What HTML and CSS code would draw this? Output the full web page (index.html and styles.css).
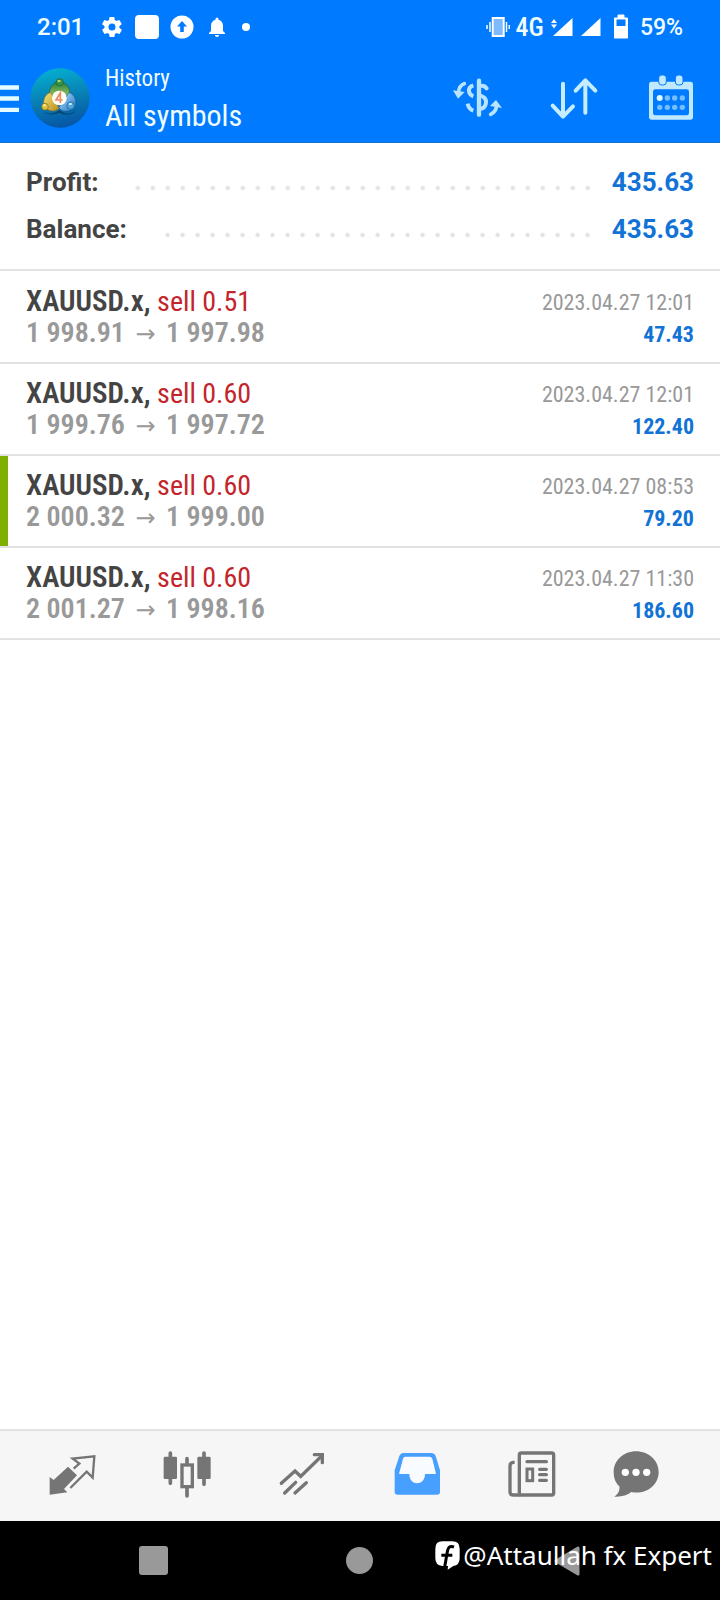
FILE: index.html
```html
<!DOCTYPE html>
<html lang="en">
<head>
<meta charset="utf-8">
<meta name="viewport" content="width=device-width, initial-scale=1">
<title>History</title>
<link rel="stylesheet" href="styles.css">
</head>
<body>
<div class="app">
  <header class="header">
    <div class="status">
      <span class="time">2:01</span>
      <div class="status-left">
        <svg width="24" height="24" viewBox="0 0 24 24" fill="#fff"><path d="M19.4 13a7.500 7.500 0 0 0 0-2l2.100-1.600a.5.5 0 0 0 .1-.6l-2-3.500a.5.5 0 0 0-.6-.2l-2.500 1a7.300 7.300 0 0 0-1.700-1l-.4-2.600a.5.5 0 0 0-.5-.4h-4a.5.5 0 0 0-.5.4L9 5.100a7.700 7.700 0 0 0-1.700 1l-2.500-1a.5.5 0 0 0-.6.2l-2 3.500a.5.5 0 0 0 .1.6L4.500 11a8 8 0 0 0 0 2l-2.100 1.600a.5.5 0 0 0-.1.6l2 3.500c.1.200.4.300.6.200l2.500-1c.5.400 1.100.700 1.700 1l.4 2.600c0 .2.200.4.500.4h4c.2 0 .5-.2.5-.4l.4-2.600a7.300 7.300 0 0 0 1.700-1l2.500 1c.2.100.5 0 .6-.2l2-3.500a.5.500 0 0 0-.1-.6zM12 15.500a3.500 3.500 0 1 1 0-7 3.500 3.500 0 0 1 0 7z"/></svg>
        <span class="app-square"></span>
        <svg width="24" height="24" viewBox="0 0 24 24"><circle cx="12" cy="12" r="11.500" fill="#fff"/><path d="M12 6l5 5.500h-3.200V17h-3.600v-5.500H7z" fill="#007aff"/></svg>
        <svg width="24" height="24" viewBox="0 0 24 24" fill="#fff"><path d="M12 22a2.200 2.200 0 0 0 2.200-2H9.800a2.200 2.200 0 0 0 2.200 2zm6-6v-5c0-3.100-1.600-5.600-4.500-6.300V4a1.500 1.500 0 0 0-3 0v.7C7.600 5.400 6 7.900 6 11v5l-2 2v1h16v-1z"/></svg>
        <span class="dot"></span>
      </div>
      <div class="status-right">
        <svg width="24" height="20" viewBox="0 0 24 20"><rect x="6.700" y="1" width="11" height="18" fill="#7fb9ff" stroke="#fff" stroke-width="2"/><path d="M4 5v10M1 8v4M20.500 5v10M23.300 8v4" stroke="#fff" stroke-width="1.500"/></svg>
        <span class="network">4G</span>
        <svg class="signal-a" width="22" height="20" viewBox="0 0 22 20" fill="#fff"><path d="M21.500 1v18H2zM0 6l3-4 3 4zM0 7.500h6l-3 4z"/></svg>
        <svg class="signal-b" width="20" height="20" viewBox="0 0 20 20" fill="#fff"><path d="M19.500 1v18H0z"/></svg>
        <svg class="battery" width="16" height="26" viewBox="0 0 16 26"><path d="M5 1h6v3h3.500v20h-13V4H5z" fill="#fff" stroke="#fff" stroke-linejoin="round"/><path d="M3.500 5.500h9V12h-9z" fill="#007aff"/></svg>
        <span class="percent">59%</span>
      </div>
    </div>
    <div class="appbar">
      <button class="menu" type="button" aria-label="Menu"><svg width="19" height="28" viewBox="0 0 19 28"><path d="M0 3.500h19M0 14.500h19M0 26h19" stroke="#e4fbff" stroke-width="4.500"/></svg></button>
      <svg class="avatar" width="60" height="60" viewBox="0 0 180 180" role="img" aria-label="Account">
        <defs>
          <linearGradient id="sky" x1=".4" y1="0" x2=".6" y2="1"><stop offset="0" stop-color="#05aed0"/><stop offset=".5" stop-color="#087fb4"/><stop offset="1" stop-color="#0654a5"/></linearGradient>
          <linearGradient id="green" x1="0" y1="0" x2="0" y2="1"><stop offset="0" stop-color="#277f3b"/><stop offset="1" stop-color="#a7cf6b"/></linearGradient>
          <linearGradient id="gold" x1="0" y1="0" x2="1" y2="1"><stop offset="0" stop-color="#f7e579"/><stop offset="1" stop-color="#b58a1c"/></linearGradient>
          <linearGradient id="blue" x1="0" y1="0" x2="1" y2="1"><stop offset="0" stop-color="#b4e2ff"/><stop offset="1" stop-color="#2072c0"/></linearGradient>
        </defs>
        <circle cx="90" cy="90" r="89" fill="url(#sky)"/>
        <path d="M38 128c14 14 38 8 50-2 15 12 36 15 50 0l-6 8c-12 8-30 7-44 0-16 8-40 8-50-6z" fill="#03344f" opacity=".6"/>
        <path d="M79 43c-20 8-24 30-18 46l28-14 28 14c6-18 0-38-18-46z" fill="url(#green)" stroke="#235f39" stroke-width="2"/>
        <circle cx="89" cy="43" r="11" fill="#399344" stroke="#1c6037" stroke-width="2"/><ellipse cx="87" cy="39" rx="5" ry="3" fill="#b8e08a"/>
        <path d="M62 73c-18 6-24 25-20 40 12 20 34 20 46 8z" fill="url(#gold)" stroke="#7d6a24" stroke-width="2"/>
        <circle cx="45" cy="116" r="10" fill="#e0c23e" stroke="#806a1d" stroke-width="2"/><ellipse cx="43" cy="112" rx="4" ry="3" fill="#fff9a9"/>
        <path d="M117 73c18 8 24 25 19 42-14 18-38 20-50 4z" fill="url(#blue)" stroke="#175590" stroke-width="2"/>
        <circle cx="122" cy="113" r="11" fill="#4fa5dd" stroke="#195b93" stroke-width="2"/><ellipse cx="121" cy="108" rx="5" ry="3" fill="#d9f4ff"/>
        <circle cx="88" cy="90" r="22" fill="#fffdf4"/>
        <path d="M91 105V75L78 96h20" fill="none" stroke="#ef8b62" stroke-width="5"/>
      </svg>
      <div class="titles">
        <span class="subtitle">History</span>
        <h1 class="title">All symbols</h1>
      </div>
      <div class="actions">
        <button type="button" aria-label="Symbols"><svg width="50" height="50" viewBox="35 217 150 150" fill="none" stroke="#b9e4ff" stroke-linecap="round"><path d="M116 240v102" stroke-width="13"/><path d="M118 256c10-2 17 1 21 7M118 284c16 4 20 11 19 22-1 12-8 18-19 19" stroke-width="12"/><path d="M99 254c-9 3-14 10-13 18 1 7 5 12 13 15M82 309c2 11 8 18 17 21" stroke-width="12" stroke-linecap="butt"/><path d="M72 249c-12 5-16 13-17 23" stroke-width="11"/><path d="M38 269l35 5-20 20z" fill="#b9e4ff" stroke="none"/><path d="M151 341c12-6 16-12 17-22" stroke-width="11"/><path d="M149 316l18-18 18 24z" fill="#b9e4ff" stroke="none"/></svg></button>
        <button type="button" aria-label="Sort"><svg width="50" height="50" viewBox="327 217 150 150" fill="none" stroke="#c5edff" stroke-width="12" stroke-linecap="round" stroke-linejoin="round"><path d="M369 249v98M338 315l31 33 30-31M436 336V240M407 270l29-31 30 31"/></svg></button>
        <button type="button" aria-label="Calendar"><svg width="50" height="50" viewBox="618 217 150 150"><path fill="#c0e9ff" fill-rule="evenodd" d="M635 243h116q8 0 8 8v98q0 8-8 8H635q-8 0-8-8v-98q0-8 8-8zm11 23q-7 0-7 7v64q0 7 7 7h94q7 0 7-7v-64q0-7-7-7z"/><rect x="656" y="223" width="23" height="30" rx="9" fill="#c0e9ff" stroke="#007aff" stroke-width="3"/><rect x="706" y="223" width="23" height="30" rx="9" fill="#c0e9ff" stroke="#007aff" stroke-width="3"/><circle cx="659" cy="292" r="9" fill="#e3fbff"/><g fill="#76bfff"><circle cx="682" cy="292" r="8"/><circle cx="704" cy="292" r="8"/><circle cx="727" cy="292" r="8"/><circle cx="659" cy="320" r="8"/><circle cx="682" cy="320" r="8"/><circle cx="704" cy="320" r="8"/><circle cx="727" cy="320" r="8"/></g></svg></button>
      </div>
    </div>
  </header>

  <main class="content">
    <dl class="summary">
      <div class="summary-row"><dt>Profit:</dt><dd><span class="leader"></span><span>435.63</span></dd></div>
      <div class="summary-row"><dt>Balance:</dt><dd><span class="leader"></span><span>435.63</span></dd></div>
    </dl>
    <ul class="deals">
      <li class="deal">
        <div><p class="symbol"><b>XAUUSD.x,</b> <span class="side">sell 0.51</span></p><p class="prices">1 998.91 <span class="arrow">→</span> 1 997.98</p></div>
        <div class="result"><time>2023.04.27 12:01</time><span class="profit">47.43</span></div>
      </li>
      <li class="deal">
        <div><p class="symbol"><b>XAUUSD.x,</b> <span class="side">sell 0.60</span></p><p class="prices">1 999.76 <span class="arrow">→</span> 1 997.72</p></div>
        <div class="result"><time>2023.04.27 12:01</time><span class="profit">122.40</span></div>
      </li>
      <li class="deal deal-marked">
        <div><p class="symbol"><b>XAUUSD.x,</b> <span class="side">sell 0.60</span></p><p class="prices">2 000.32 <span class="arrow">→</span> 1 999.00</p></div>
        <div class="result"><time>2023.04.27 08:53</time><span class="profit">79.20</span></div>
      </li>
      <li class="deal">
        <div><p class="symbol"><b>XAUUSD.x,</b> <span class="side">sell 0.60</span></p><p class="prices">2 001.27 <span class="arrow">→</span> 1 998.16</p></div>
        <div class="result"><time>2023.04.27 11:30</time><span class="profit">186.60</span></div>
      </li>
    </ul>
  </main>

  <nav class="tabs">
    <button type="button" aria-label="Quotes"><svg width="50" height="50" viewBox="142 93 150 150"><path d="M150 171l12 9 43-40 27 26-39 41 10 10-53 7z" fill="#757575"/><path d="M222 146l17-15-20-15 65-7-5 64-18-18-49 49" fill="none" stroke="#757575" stroke-width="7"/></svg></button>
    <button type="button" aria-label="Charts"><svg width="50" height="50" viewBox="487 93 150 150"><g fill="#757575"><rect x="492" y="110" width="40" height="67" rx="4"/><rect x="593" y="110" width="40" height="67" rx="4"/></g><path d="M512 99v91M613 99v94M562 116v18M562 204v24" stroke="#757575" stroke-width="11" stroke-linecap="round"/><rect x="547" y="135" width="31" height="65" fill="#f6f6f6" stroke="#757575" stroke-width="10"/></svg></button>
    <button type="button" aria-label="Trade"><svg width="50" height="50" viewBox="832 93 150 150" fill="none" stroke="#757575" stroke-width="10" stroke-linecap="round"><path d="M845 190l41-37 17 16 63-61M855 219l33-32M886 219l34-31"/><path d="M944 104h24v24" stroke-width="10"/></svg></button>
    <button type="button" aria-label="History" aria-current="page"><svg width="50" height="50" viewBox="97 93 150 150"><path d="M132 99h81q12 0 15 9l13 43v65q0 8-9 8H114q-9 0-9-8v-65l14-43q4-9 13-9z" fill="#479fff"/><path d="M137 110h71q8 0 10 6l11 46h-33c0 37-47 37-47 0h-31l12-46q2-6 7-6z" fill="#f8fbff"/></svg></button>
    <button type="button" aria-label="News"><svg width="50" height="50" viewBox="445 93 150 150" fill="none" stroke="#757575" stroke-width="10"><rect x="482" y="99" width="103" height="126" rx="6"/><path d="M468 127h-4q-10 1-10 10v78q0 10 10 10h22"/><path d="M505 125h58M543 148h20M543 164h20M543 181h20" stroke-linecap="round"/><rect x="505" y="147" width="17" height="35" stroke-width="9"/></svg></button>
    <button type="button" aria-label="Messages"><svg width="50" height="50" viewBox="753 93 150 150"><path d="M828 94c38 0 68 27 68 62 0 40-39 69-82 60-12 9-28 15-51 14 13-9 17-20 15-31-12-11-17-26-17-43 0-35 30-62 67-62z" fill="#757575"/><g fill="#fff"><circle cx="796" cy="157" r="11"/><circle cx="828" cy="157" r="11"/><circle cx="860" cy="157" r="11"/></g></svg></button>
  </nav>

  <footer class="system">
    <button type="button" aria-label="Recent apps"><span class="recents"></span></button>
    <button type="button" aria-label="Home"><span class="home"></span></button>
    <button type="button" aria-label="Back"><svg width="30" height="32" viewBox="0 0 30 32"><path d="M26 3v26L4 16z" fill="#999" stroke="#999" stroke-width="3" stroke-linejoin="round"/></svg></button>
    <div class="credit">
      <svg width="25" height="29" viewBox="0 0 75 87"><path d="M22 1h30q22 0 22 22v29q0 21-19 23l-17 11 1-11H22Q1 74 1 52V23Q1 1 22 1z" fill="#fff"/><path d="M57 18c-13-5-18 2-20 14l-8 46M19 43h33" fill="none" stroke="#000" stroke-width="9"/></svg>
      <span>@Attaullah fx Expert</span>
    </div>
  </footer>
</div>
</body>
</html>
```
FILE: styles.css
```css
* {
  box-sizing: border-box;
}

body {
  margin: 0;
  background: #fff;
  font-family: "Roboto", sans-serif;
}

.app {
  display: flex;
  flex-direction: column;
  min-height: 100vh;
}

button {
  display: flex;
  align-items: center;
  justify-content: center;
  padding: 0;
  border: 0;
  background: none;
}

svg {
  display: block;
  flex: none;
}

.header {
  background: #007aff;
  border-bottom: 1px solid #1272cf;
  color: #f0fdff;
}

.status {
  display: flex;
  align-items: center;
  height: 54px;
  padding: 0 37px;
  font-size: 24px;
  font-weight: 500;
}

.status-left {
  display: flex;
  align-items: center;
  gap: 11px;
  margin-left: 16px;
}

.app-square {
  width: 24px;
  height: 24px;
  border-radius: 4px;
  background: #fff;
}

.dot {
  width: 8px;
  height: 8px;
  margin-left: 2px;
  border-radius: 50%;
  background: #fff;
}

.status-right {
  display: flex;
  align-items: center;
  margin-left: auto;
}

.network {
  margin-left: 6px;
  font-family: "Roboto Condensed", "Liberation Sans Narrow", "Roboto", sans-serif;
  font-size: 26px;
}

.signal-a {
  margin-left: 7px;
}

.signal-b {
  margin-left: 8px;
}

.battery {
  margin-left: 12px;
}

.percent {
  margin-left: 11px;
  font-size: 23px;
}

.appbar {
  display: flex;
  align-items: center;
  height: 88px;
  padding-right: 24px;
}

.avatar {
  margin-left: 11px;
}

.titles {
  display: flex;
  flex-direction: column;
  margin-left: 15px;
  padding-bottom: 2px;
  font-family: "Roboto Condensed", "Liberation Sans Narrow", "Roboto", sans-serif;
  line-height: 37px;
}

.subtitle {
  font-size: 23px;
}

.title {
  margin: 0;
  font-size: 30px;
  font-weight: 400;
}

.actions {
  display: flex;
  gap: 47px;
  margin-left: auto;
}

.content {
  flex: 1;
}

.summary {
  margin: 0;
  padding: 16px 26px 16px;
  border-bottom: 2px solid #e2e2e2;
  font-size: 26px;
  font-weight: 700;
  line-height: 47px;
}

.summary-row {
  display: flex;
}

.summary dt {
  color: #444;
}

.summary dd {
  display: flex;
  flex: 1;
  margin: 0 0 0 32px;
  color: #1273d6;
}

.leader {
  flex: 1;
  margin-right: 17px;
  background: radial-gradient(circle, #e0e0e0 0 1px, transparent 3px) right 26px / 15px 6px repeat-x;
}

.deals {
  margin: 0;
  padding: 1px 0 0;
  list-style: none;
  font-family: "Roboto Condensed", "Liberation Sans Narrow", "Roboto", sans-serif;
}

.deal {
  display: flex;
  justify-content: space-between;
  padding: 13px 26px;
  border-bottom: 2px solid #e2e2e2;
  line-height: 32px;
}

.deal-marked {
  background: linear-gradient(#7fb000, #7fb000) left / 8px 100% no-repeat;
}

.deal p {
  margin: 0;
  font-size: 29px;
}

.symbol b {
  color: #444;
  font-weight: 600;
}

.deal .side {
  color: #c4242b;
  font-size: 28px;
  line-height: 1;
}

.deal .prices {
  color: #999;
  font-size: 28px;
  font-weight: 600;
}

.arrow {
  margin: 0 4px;
  font-family: "Noto Sans", "DejaVu Sans", sans-serif;
  font-size: 24px;
  font-weight: 400;
  line-height: 1;
}

.result {
  display: flex;
  flex-direction: column;
  align-items: flex-end;
  padding-top: 2px;
  margin-bottom: -2px;
  font-size: 22px;
}

.result time {
  color: #999;
}

.profit {
  color: #1273d6;
  font-weight: 700;
}

.tabs {
  display: grid;
  grid-template-columns: repeat(5, 115fr) 92fr;
  height: 92px;
  padding: 0 38px 0 14px;
  border-top: 2px solid #e2e2e2;
  background: #f6f6f6;
}

.system {
  position: relative;
  display: grid;
  grid-template-columns: repeat(3, 1fr);
  height: 79px;
  padding: 0 50px;
  background: #000;
}

.recents {
  width: 29px;
  height: 29px;
  border-radius: 3px;
  background: #999;
}

.home {
  width: 27px;
  height: 27px;
  border-radius: 50%;
  background: #999;
}

.credit {
  position: absolute;
  right: 8px;
  top: 14px;
  display: flex;
  align-items: center;
  gap: 3px;
  color: #fff;
  font-family: "Noto Sans", sans-serif;
  font-size: 26px;
  font-weight: 400;
  line-height: 40px;
}
```
